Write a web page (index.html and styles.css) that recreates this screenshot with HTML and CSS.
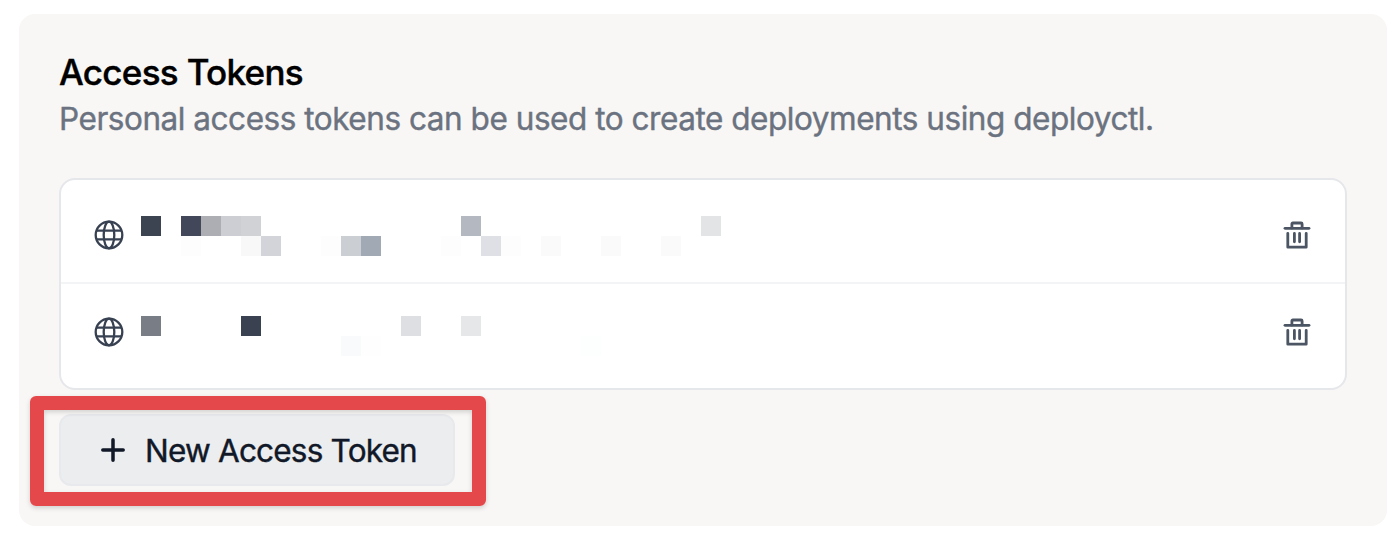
FILE: index.html
```html
<!DOCTYPE html>
<html lang="en">
<head>
<meta charset="utf-8">
<title>Access Tokens</title>
<link rel="stylesheet" href="styles.css">
</head>
<body>
<svg width="0" height="0" class="defs" aria-hidden="true">
  <symbol id="globe" viewBox="0 0 30 30">
    <g fill="none" stroke="#374151" stroke-width="2.3">
      <circle cx="15" cy="15" r="13.3"/>
      <ellipse cx="15" cy="15" rx="5.3" ry="13.3"/>
      <path d="M2.2 10.6H27.8M2.2 19.4H27.8"/>
    </g>
  </symbol>
  <symbol id="trash" viewBox="0 0 28 28">
    <g fill="none" stroke="#4b5563" stroke-width="2.8" stroke-linecap="round" stroke-linejoin="round">
      <path d="M2 7.3H26"/>
      <path d="M8.9 7V3Q8.9 2 9.9 2H18.1Q19.1 2 19.1 3V7"/>
      <path d="M4.8 12.3V26.2H23.2V12.3"/>
      <path d="M11.4 12.5V20.8M16.6 12.5V20.8"/>
    </g>
  </symbol>
</svg>
<main class="panel">
  <h1 class="title">Access Tokens</h1>
  <p class="description">Personal access tokens can be used to create deployments using deployctl.</p>
  <ul class="tokens">
    <li class="token">
      <svg class="globe"><use href="#globe"/></svg>
      <svg class="mosaic" viewBox="0 0 30 2" shape-rendering="crispEdges">
        <path fill="#3d4451" d="M0 0h1v1h-1z"/>
        <path fill="#42485a" d="M2 0h1v1h-1z"/>
        <path fill="#adaeb4" d="M3 0h1v1h-1z"/>
        <path fill="#cdced3" d="M4 0h1v1h-1z"/>
        <path fill="#d1d2d6" d="M5 0h1v1h-1z"/>
        <path fill="#b3b8c1" d="M16 0h1v1h-1z"/>
        <path fill="#e3e4e6" d="M28 0h1v1h-1z"/>
        <path fill="#fdfdfd" d="M2 1h1v1h-1zM9 1h1v1h-1zM15 1h1v1h-1zM18 1h1v1h-1z"/>
        <path fill="#f8f8f8" d="M5 1h1v1h-1z"/>
        <path fill="#d3d4d9" d="M6 1h1v1h-1z"/>
        <path fill="#cbcfd4" d="M10 1h1v1h-1z"/>
        <path fill="#a1a9b4" d="M11 1h1v1h-1z"/>
        <path fill="#dfe0e5" d="M17 1h1v1h-1z"/>
        <path fill="#fafafa" d="M20 1h1v1h-1zM23 1h1v1h-1zM26 1h1v1h-1z"/>
      </svg>
      <svg class="trash"><use href="#trash"/></svg>
    </li>
    <li class="token token-last">
      <svg class="globe"><use href="#globe"/></svg>
      <svg class="mosaic" viewBox="0 0 30 2" shape-rendering="crispEdges">
        <path fill="#797d86" d="M0 0h1v1h-1z"/>
        <path fill="#3a4150" d="M5 0h1v1h-1z"/>
        <path fill="#dedfe3" d="M13 0h1v1h-1z"/>
        <path fill="#e6e7e9" d="M16 0h1v1h-1z"/>
        <path fill="#f9fafc" d="M10 1h1v1h-1z"/>
        <path fill="#fefefe" d="M11 1h1v1h-1z"/>
        <path fill="#fdfffe" d="M22 1h1v1h-1z"/>
      </svg>
      <svg class="trash"><use href="#trash"/></svg>
    </li>
  </ul>
  <div class="action">
    <button class="new-token" type="button">
      <svg class="plus" viewBox="0 0 24 24"><path d="M12 1.8V22.2M1.8 12H22.2" fill="none" stroke="#111827" stroke-width="3.5" stroke-linecap="round"/></svg>
      <span>New Access Token</span>
    </button>
    <div class="highlight"></div>
  </div>
</main>
</body>
</html>
```
FILE: styles.css
```css
* { box-sizing: border-box; }

body {
  margin: 0;
  padding: 14px 13px 14px 19px;
  height: 540px;
  background: #fff;
  font-family: Inter, "Liberation Sans", sans-serif;
}

.defs { display: none; }

.panel {
  height: 512px;
  padding: 35px 40px 40px;
  border-radius: 16px;
  background: #f8f7f5;
}

.title {
  margin: 0;
  font-size: 35px;
  line-height: 46px;
  font-weight: 500;
  letter-spacing: -0.7px;
  color: #000;
  white-space: nowrap;
  -webkit-text-stroke: 0.4px currentColor;
}

.description {
  margin: 1px 0 36px;
  font-size: 31.5px;
  line-height: 46px;
  letter-spacing: -0.46px;
  color: #6b7280;
  white-space: nowrap;
  -webkit-text-stroke: 0.4px currentColor;
}

.tokens {
  height: 212px;
  margin: 0 0 24px;
  padding: 0;
  list-style: none;
  border: 2px solid #e5e7eb;
  border-radius: 16px;
  background: #fff;
}

.token {
  display: flex;
  align-items: flex-start;
  height: 104px;
  padding: 36px 34px 0 33px;
  border-bottom: 2px solid #f3f4f6;
}

.token-last {
  padding-top: 32px;
  border-bottom: 0;
}

.globe { width: 30px; height: 30px; margin-top: 4px; }
.mosaic { width: 600px; height: 40px; margin-left: 17px; }
.trash { width: 28px; height: 28px; margin: 5px 0 0 auto; }
.token-last .globe { margin-top: 1px; }
.token-last .trash { margin-top: 2px; }

.action {
  position: relative;
  width: 396px;
}

.new-token {
  display: flex;
  align-items: center;
  gap: 20px;
  width: 396px;
  height: 72px;
  padding: 0 0 0 40px;
  border: 2px solid #e7e9ec;
  border-radius: 12px;
  background: #ebedef;
  color: #111827;
  font-family: inherit;
  font-size: 31.5px;
  letter-spacing: -0.8px;
  white-space: nowrap;
  -webkit-text-stroke: 0.4px currentColor;
}

.plus { width: 24px; height: 24px; flex: none; }

.highlight {
  position: absolute;
  left: -29px;
  top: -18px;
  width: 456px;
  height: 110px;
  border: 14px solid #e5484a;
  border-radius: 6px;
  box-shadow: 0 2px 5px rgba(0, 0, 0, 0.16), inset 0 2px 5px rgba(0, 0, 0, 0.16);
}
```
